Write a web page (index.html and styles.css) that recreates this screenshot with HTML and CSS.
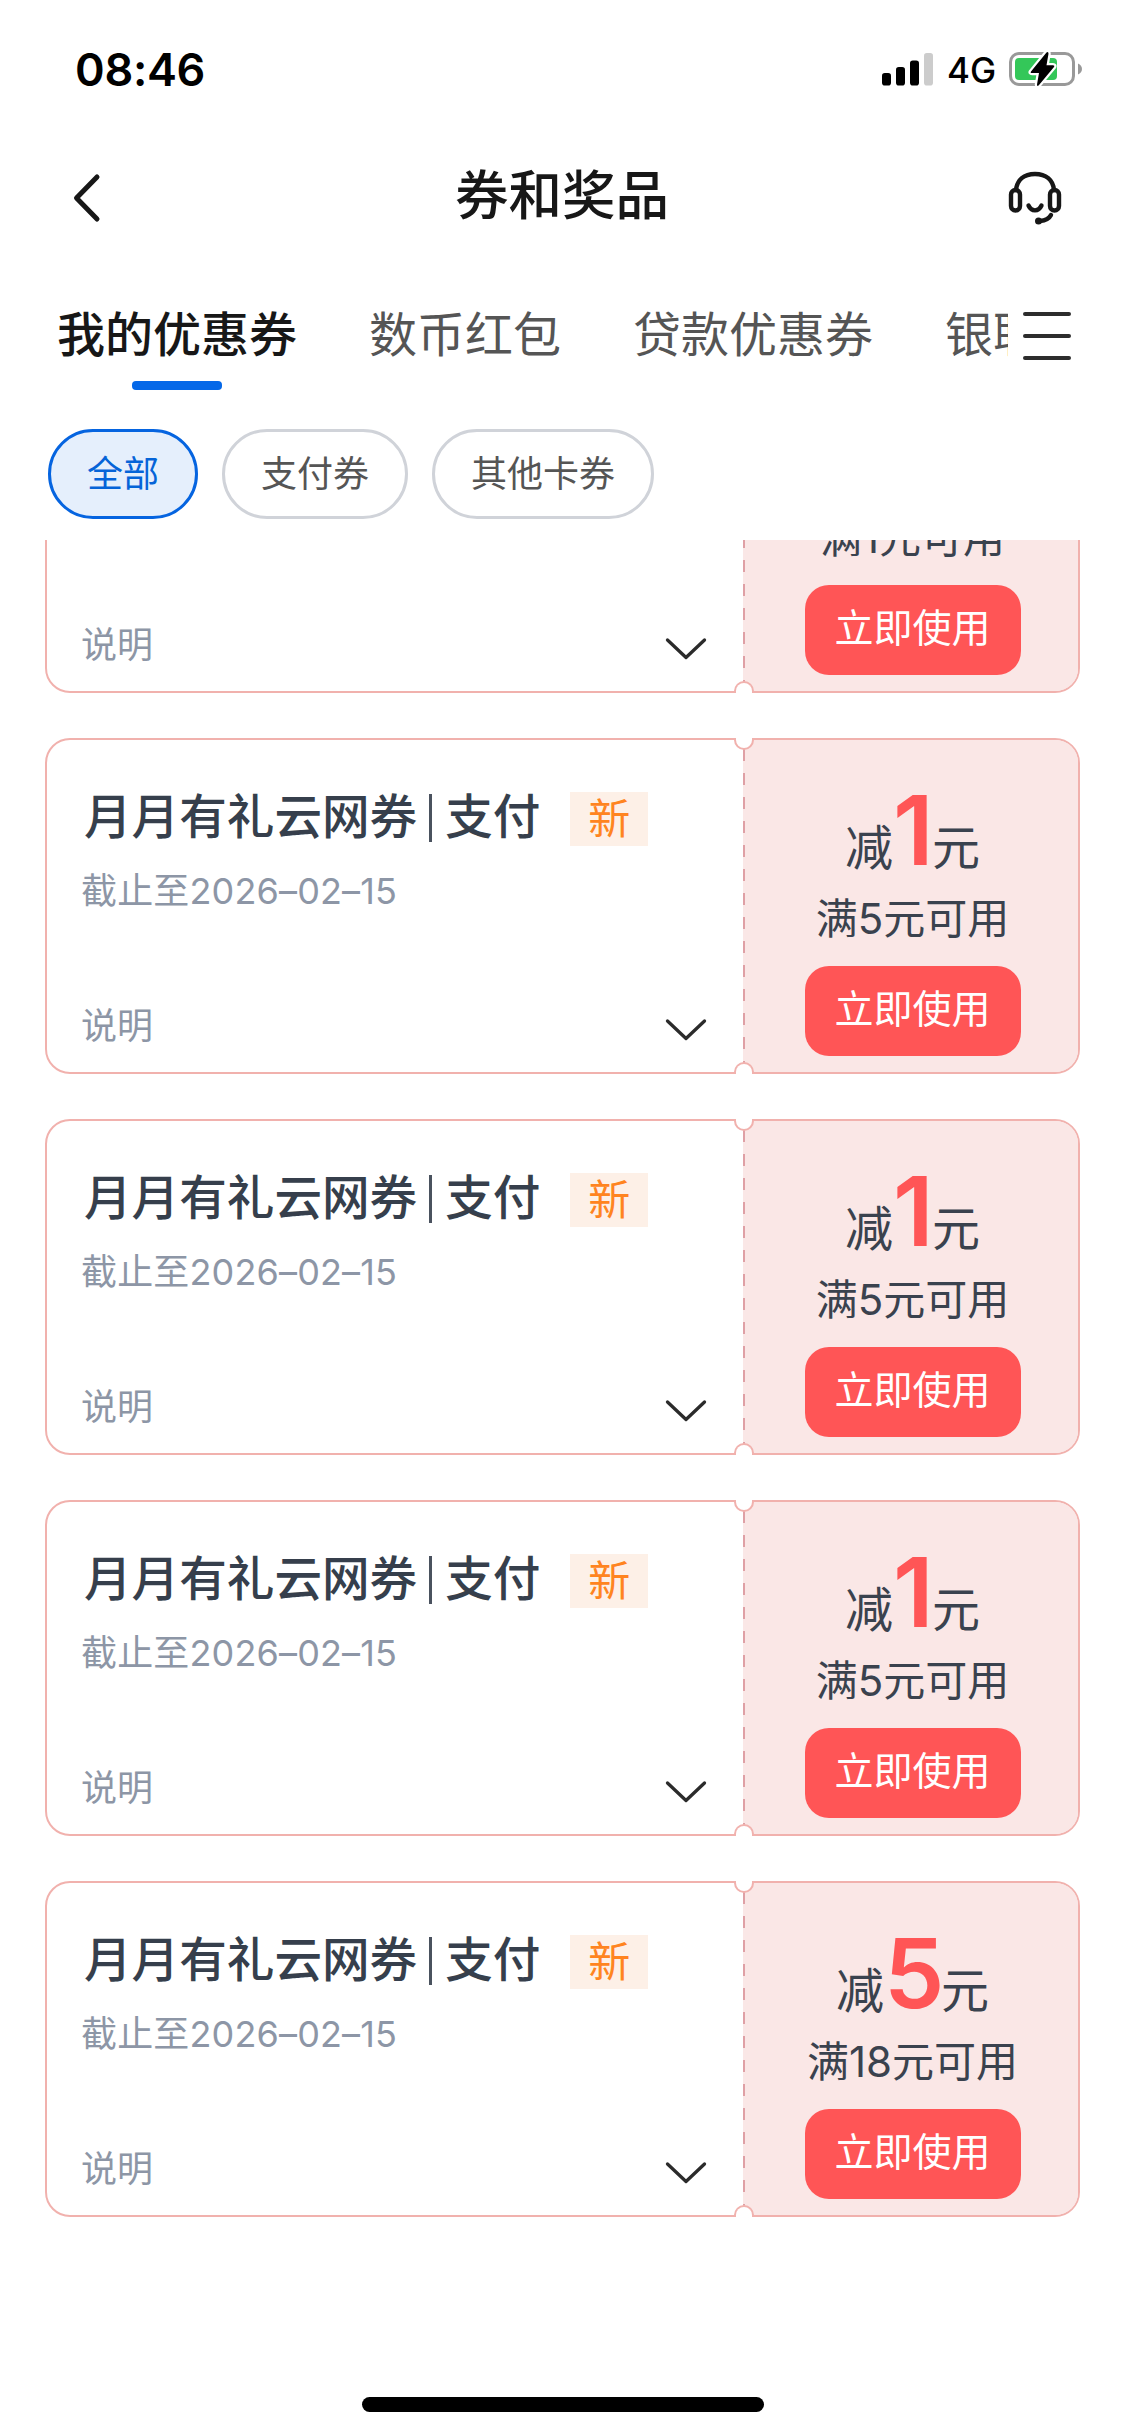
FILE: index.html
```html
<!DOCTYPE html>
<html lang="zh-CN">
<head>
<meta charset="utf-8">
<title>券和奖品</title>
<link rel="stylesheet" href="styles.css">
</head>
<body>
<svg class="defs" width="0" height="0">
  <symbol id="down" viewBox="0 0 42 24"><path d="M2.500 3 21 20.500 39.500 3" fill="none" stroke="#2b2b2b" stroke-width="3.300" stroke-linecap="round" stroke-linejoin="round"/></symbol>
</svg>
<div class="screen">
  <div class="status">
    <span class="time">08:46</span>
    <div class="indicators">
      <svg class="signal" width="51" height="33" viewBox="0 0 51 33">
        <rect x="0" y="20" width="9" height="12.5" rx="2.8"/>
        <rect x="14" y="14" width="9" height="18.5" rx="2.8"/>
        <rect x="28" y="7.500" width="9" height="25" rx="2.8"/>
        <rect x="42" y="0" width="9" height="32.500" rx="2.8" fill="#ccc"/>
      </svg>
      <span class="network">4G</span>
      <svg class="battery" width="74" height="38" viewBox="0 0 74 38">
        <rect x="1.500" y="3.500" width="63" height="31" rx="8.500" fill="#fff" stroke="#999" stroke-width="3"/>
        <path d="M69 13.500c2.500 1 4 3 4 5.500s-1.500 4.500-4 5.500z" fill="#999"/>
        <rect x="6" y="8" width="42" height="22" rx="4" fill="#34c759"/>
        <path d="M37.500 2.500 22 21.500q-1 1.500 1 1.500h7L28 34.500q0 2.500 2 .5L45 17q1-1.700-1-1.700h-6.500l2-11.500q0-2.600-2-1.300z" stroke="#fff" stroke-width="4.500" paint-order="stroke"/>
      </svg>
    </div>
  </div>
  <header class="nav">
    <svg class="back" width="30" height="50" viewBox="0 0 30 50"><path d="M25 4 4.500 25 25 46" fill="none" stroke="#171717" stroke-width="5" stroke-linecap="round" stroke-linejoin="round"/></svg>
    <h1>券和奖品</h1>
    <svg class="service" width="54" height="54" viewBox="0 0 54 54" fill="none" stroke="#171717" stroke-width="4.400" stroke-linecap="round">
      <path d="M8 19C9 9 16 3 27 3s18 6 19 16"/>
      <rect x="3" y="19" width="9" height="20.500" rx="4.500"/>
      <rect x="42" y="19" width="9" height="20.500" rx="4.500"/>
      <path d="M20.500 34.500c3 6.500 10 6.500 13 0"/>
      <path d="M43 44c-2 4-6 5.500-11 6"/>
      <circle cx="30.500" cy="50" r="3.500" fill="#171717" stroke="none"/>
    </svg>
  </header>
  <nav class="tabbar">
    <div class="tabs">
      <span class="tab active">我的优惠券</span>
      <span class="tab">数币红包</span>
      <span class="tab">贷款优惠券</span>
      <span class="tab">银联</span>
    </div>
    <div class="menu"><i></i><i></i><i></i></div>
  </nav>
  <div class="filters">
    <span class="pill selected">全部</span>
    <span class="pill">支付券</span>
    <span class="pill">其他卡券</span>
  </div>
  <main class="viewport">
    <div class="coupons">
      <article class="coupon">
        <div class="info">
          <div class="detail"><span>说明</span><svg width="42" height="24"><use href="#down"/></svg></div>
        </div>
        <div class="offer">
          <p class="rule">满1元可用</p><button class="use">立即使用</button>
        </div>
        <i class="notch top"></i><i class="notch bottom"></i>
      </article>
      <article class="coupon">
        <div class="info">
          <div class="heading"><h2>月月有礼云网券<b></b>支付</h2><span class="tag">新</span></div>
          <p class="date">截止至2026–02–15</p>
          <div class="detail"><span>说明</span><svg width="42" height="24"><use href="#down"/></svg></div>
        </div>
        <div class="offer">
          <p class="amount">减<strong>1</strong>元</p><p class="rule">满5元可用</p><button class="use">立即使用</button>
        </div>
        <i class="notch top"></i><i class="notch bottom"></i>
      </article>
      <article class="coupon">
        <div class="info">
          <div class="heading"><h2>月月有礼云网券<b></b>支付</h2><span class="tag">新</span></div>
          <p class="date">截止至2026–02–15</p>
          <div class="detail"><span>说明</span><svg width="42" height="24"><use href="#down"/></svg></div>
        </div>
        <div class="offer">
          <p class="amount">减<strong>1</strong>元</p><p class="rule">满5元可用</p><button class="use">立即使用</button>
        </div>
        <i class="notch top"></i><i class="notch bottom"></i>
      </article>
      <article class="coupon">
        <div class="info">
          <div class="heading"><h2>月月有礼云网券<b></b>支付</h2><span class="tag">新</span></div>
          <p class="date">截止至2026–02–15</p>
          <div class="detail"><span>说明</span><svg width="42" height="24"><use href="#down"/></svg></div>
        </div>
        <div class="offer">
          <p class="amount">减<strong>1</strong>元</p><p class="rule">满5元可用</p><button class="use">立即使用</button>
        </div>
        <i class="notch top"></i><i class="notch bottom"></i>
      </article>
      <article class="coupon">
        <div class="info">
          <div class="heading"><h2>月月有礼云网券<b></b>支付</h2><span class="tag">新</span></div>
          <p class="date">截止至2026–02–15</p>
          <div class="detail"><span>说明</span><svg width="42" height="24"><use href="#down"/></svg></div>
        </div>
        <div class="offer">
          <p class="amount">减<strong class="wide">5</strong>元</p><p class="rule">满18元可用</p><button class="use">立即使用</button>
        </div>
        <i class="notch top"></i><i class="notch bottom"></i>
      </article>
    </div>
  </main>
  <footer class="home"><i></i></footer>
</div>
</body>
</html>
```
FILE: styles.css
```css
* { box-sizing: border-box; margin: 0; padding: 0; }
body { background: #fff; font-family: Inter, "Noto Sans CJK SC", sans-serif; color: #171717; }
.defs { display: block; }
.screen { width: 1125px; height: 2436px; display: flex; flex-direction: column; overflow: hidden; background: #fff; }

.status { height: 132px; padding: 0 42px 0 75px; display: flex; justify-content: space-between; align-items: flex-start; color: #000; }
.time { margin-top: 42px; font-size: 45px; line-height: 56px; font-weight: 600; letter-spacing: -0.3px; }
.indicators { display: flex; align-items: flex-start; padding-top: 50px; }
.signal { margin-top: 3px; }
.network { width: 76px; padding-left: 14px; font-size: 35px; line-height: 40px; font-weight: 500; white-space: nowrap; }

.nav { height: 130px; padding: 2px 63px 0 72px; display: grid; grid-template-columns: 54px 1fr 54px; align-items: center; }
.nav h1 { text-align: center; font-size: 53.5px; line-height: 70px; font-weight: 500; padding: 0 10px 5px 0; }

.tabbar { height: 144px; padding-right: 54px; display: flex; align-items: center; }
.tabs { width: 1008px; height: 144px; padding-left: 57px; display: flex; gap: 72px; align-items: center; overflow: hidden; }
.tab { position: relative; flex: none; padding-top: 2px; font-size: 48px; line-height: 72px; color: #555; }
.tab.active { color: #171717; font-weight: 500; }
.tab.active::after { content: ""; position: absolute; left: 75px; bottom: -19px; width: 90px; height: 9px; border-radius: 4px; background: #0568e8; }
.menu { margin: 4px 0 0 15px; width: 48px; height: 48px; display: flex; flex-direction: column; justify-content: space-between; }
.menu i { height: 4px; border-radius: 2px; background: #2d2d2d; }

.filters { height: 134px; padding: 23px 48px 21px; display: flex; gap: 24px; }
.pill { height: 90px; padding: 0 36px; border: 3px solid #d0d3d9; border-radius: 45px; font-size: 36px; line-height: 84px; color: #555; }
.pill.selected { color: #0564d8; border-color: #0564e0; background: #e5effc; }

.viewport { height: 1800px; overflow: hidden; }
.coupons { margin-top: -183px; padding: 0 45px; display: flex; flex-direction: column; gap: 45px; }
.coupon { position: relative; height: 336px; display: grid; grid-template-columns: 696px 1fr; border: 2px solid #f1b1ad; border-radius: 25px; }
.info { padding: 47px 36px 22px 34px; display: flex; flex-direction: column; }
.heading { height: 60px; display: flex; align-items: center; gap: 30px; }
.heading h2 { display: flex; align-items: center; padding-left: 3px; font-size: 47.6px; line-height: 60px; font-weight: 500; color: #363f4c; }
.heading b { width: 3px; height: 48px; margin: 2px 13px 0 12px; background: #4a525e; }
.tag { width: 78px; height: 54px; margin-top: 4px; font-size: 42px; line-height: 54px; text-align: center; color: #ff8420; background: #fdf0e7; }
.date { margin-top: 20px; font-size: 36px; line-height: 48px; letter-spacing: 0.15px; color: #8d96a6; }
.detail { margin-top: auto; display: flex; justify-content: space-between; align-items: center; font-size: 36px; line-height: 48px; color: #8d96a6; }
.detail svg { margin: 8px 0 0; }
.offer { padding: 38px 0 16px 4px; display: flex; flex-direction: column; align-items: center; border-radius: 0 22px 22px 0; color: #3a424e;
  background: linear-gradient(#dfa0a5 50%, transparent 0) 0 9px / 2px 24px repeat-y, #fae7e6; }
.amount { height: 104px; line-height: 104px; font-size: 48px; white-space: nowrap; }
.amount strong { display: inline-block; width: 39px; text-align: center; font-size: 96px; line-height: 104px; font-weight: 600; color: #ff5556; }
.amount .wide { width: 57px; }
.rule { height: 60px; margin-top: auto; font-size: 42px; line-height: 60px; }
.use { width: 216px; height: 90px; margin-top: 17px; border: 0; border-radius: 24px; background: #ff5556; color: #fff; font: inherit; font-size: 39px; line-height: 84px; padding-bottom: 4px; }
.notch { position: absolute; left: 687px; width: 20px; height: 12px; background: #fff; border: 2px solid #f1b1ad; }
.notch.top { top: -2px; border-top: 0; border-radius: 0 0 10px 10px; }
.notch.bottom { bottom: -2px; border-bottom: 0; border-radius: 10px 10px 0 0; }

.home { display: flex; justify-content: center; padding-top: 57px; }
.home i { width: 402px; height: 15px; border-radius: 8px; background: #000; }
```
